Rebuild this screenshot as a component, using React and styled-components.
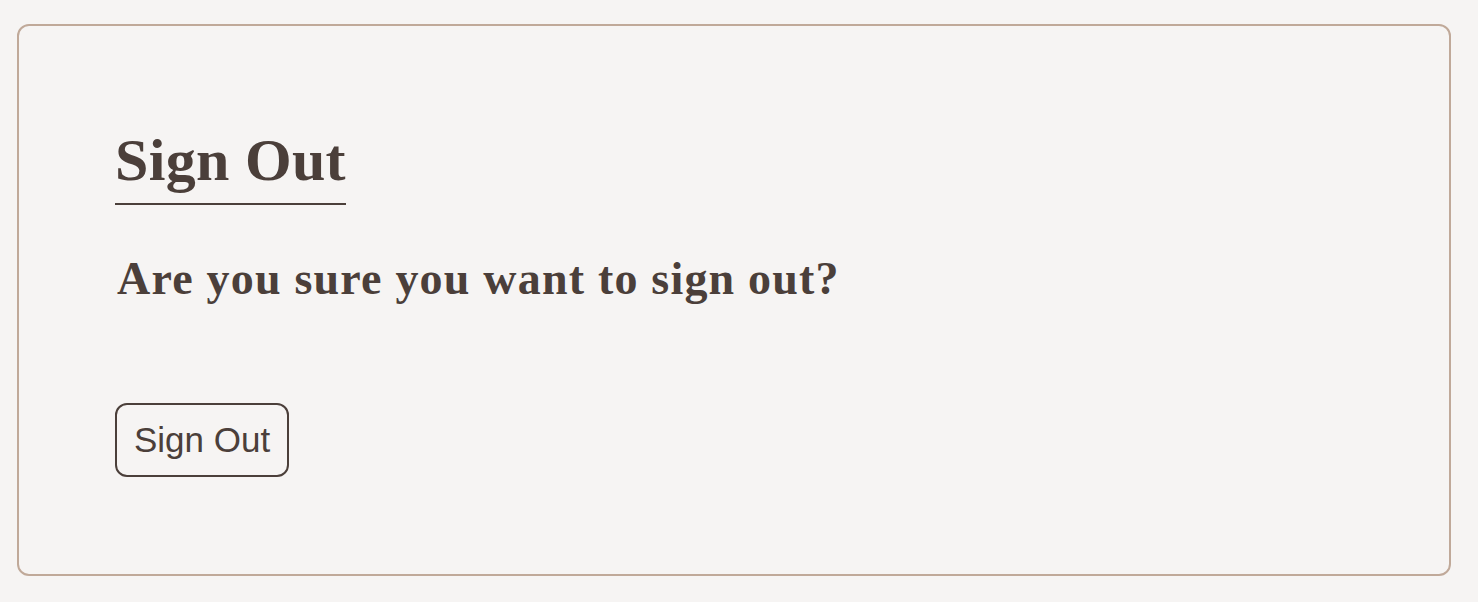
import React from 'react';
import styled, { createGlobalStyle } from 'styled-components';

const GlobalStyle = createGlobalStyle`
	html, body {
		margin: 0;
		background: #f6f4f3;
	}
`;

const Page = styled.div`
	padding: 24px 27px 26px 17px;
	box-sizing: border-box;
`;

const Card = styled.section`
	display: flex;
	flex-direction: column;
	align-items: flex-start;
	border: 2px solid #c0a999;
	border-radius: 12px;
	padding: 104px 96px 97px 96px;
	color: #4b3f3a;
`;

const Title = styled.h2`
	margin: 0;
	display: inline-block;
	font-family: 'Liberation Serif', serif;
	font-weight: bold;
	font-size: 60px;
	line-height: 60px;
	letter-spacing: 0.3px;
	padding-bottom: 13px;
	border-bottom: 2px solid #4b3f3a;
`;

const Question = styled.p`
	margin: 51px 0 0 2px;
	font-family: 'Liberation Serif', serif;
	font-weight: bold;
	font-size: 46px;
	line-height: 46px;
	letter-spacing: 1.2px;
`;

const SignOutButton = styled.button`
	margin-top: 101px;
	padding: 14px 17px;
	background: transparent;
	border: 2px solid #4b3f3a;
	border-radius: 12px;
	color: #4b3f3a;
	font-family: 'Liberation Sans', Arial, sans-serif;
	font-size: 35px;
	line-height: 42px;
	cursor: pointer;
`;

export default function App() {
	return (
		<Page>
			<GlobalStyle />
			<Card>
				<Title>Sign Out</Title>
				<Question>Are you sure you want to sign out?</Question>
				<SignOutButton>Sign Out</SignOutButton>
			</Card>
		</Page>
	);
}
